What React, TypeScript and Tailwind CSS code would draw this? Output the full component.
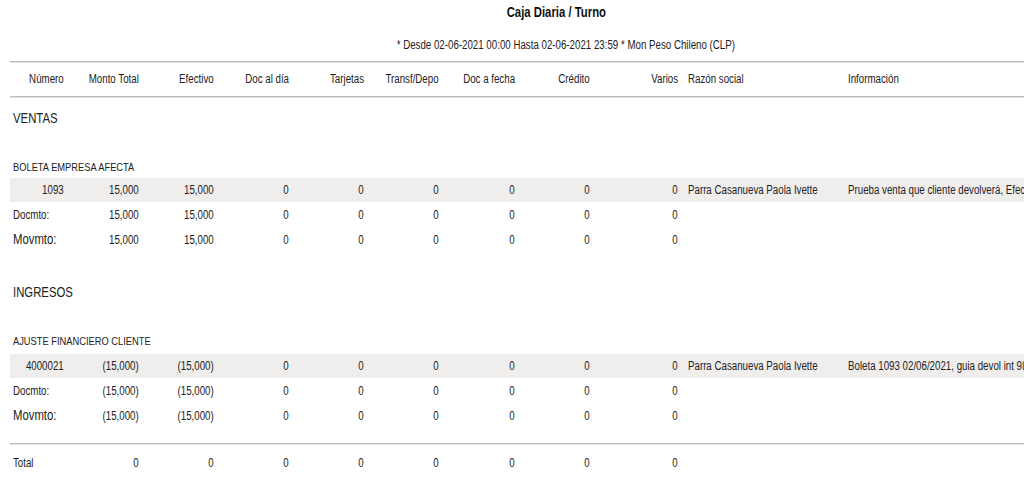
import React from "react";

const FONT = { fontFamily: "'Liberation Sans', Arial, sans-serif" };

const GRID = "grid grid-cols-[54px_75px_75px_75px_75px_75px_76px_75px_88px_170px_1fr] items-center";

type Align = "l" | "r" | "c";

function N({ children, a = "l" }: { children: React.ReactNode; a?: Align }) {
  const o = a === "l" ? "origin-left" : a === "r" ? "origin-right" : "origin-center";
  return <span className={`inline-block whitespace-nowrap scale-x-[0.81] ${o}`}>{children}</span>;
}

type RowProps = {
  first: string;
  firstLeft?: boolean;
  firstBig?: boolean;
  vals: string[];
  razon?: string;
  info?: string;
  band?: boolean;
  h: string;
};

function Row({ first, firstLeft, firstBig, vals, razon, info, band, h }: RowProps) {
  return (
    <div className={`${GRID} ${h} ${band ? "bg-[#f0eeed]" : ""} text-[12px] text-[#222] whitespace-nowrap`}>
      <div className={firstLeft ? `pl-[3px] text-left ${firstBig ? "text-[14px]" : ""}` : "text-right"}>
        <N a={firstLeft ? "l" : "r"}>{first}</N>
      </div>
      {vals.map((v, i) => (
        <div key={i} className="text-right">
          <N a="r">{v}</N>
        </div>
      ))}
      <div className="pl-[10px] overflow-hidden">{razon ? <N>{razon}</N> : null}</div>
      <div className="overflow-hidden">{info ? <N>{info}</N> : null}</div>
    </div>
  );
}

function Rule() {
  return <div className="h-[2px] bg-[#bdbdbd] border-b border-[#e2e2e2]" />;
}

const HEAD = [
  "Número",
  "Monto Total",
  "Efectivo",
  "Doc al día",
  "Tarjetas",
  "Transf/Depo",
  "Doc a fecha",
  "Crédito",
  "Varios",
];

export default function App() {
  const zeros = ["0", "0", "0", "0", "0", "0"];
  const pos = ["15,000", "15,000", ...zeros];
  const neg = ["(15,000)", "(15,000)", ...zeros];
  return (
    <div className="w-[1024px] h-[485px] overflow-hidden bg-white text-[#222]" style={FONT}>
      <div className="h-[24px] leading-[24px] pl-[88px] text-center text-[14px] font-bold text-[#111]">
        <N a="c">Caja Diaria / Turno</N>
      </div>
      <div className="mt-[11px] h-[20px] leading-[20px] pl-[108px] text-center text-[12px] text-[#222]">
        <N a="c">* Desde 02-06-2021 00:00 Hasta 02-06-2021 23:59 * Mon Peso Chileno (CLP)</N>
      </div>
      <div className="pl-[10px]">
        <div className="mt-[6px]">
          <Rule />
        </div>
        <div className={`${GRID} mt-[6px] h-[20px] text-[12px] text-[#222] whitespace-nowrap`}>
          {HEAD.map((h) => (
            <div key={h} className="text-right">
              <N a="r">{h}</N>
            </div>
          ))}
          <div className="pl-[10px]">
            <N>Razón social</N>
          </div>
          <div>
            <N>Información</N>
          </div>
        </div>
        <div className="mt-[7px]">
          <Rule />
        </div>

        <div className="mt-[10px] h-[20px] leading-[20px] pl-[3px] text-[14px]">
          <N>VENTAS</N>
        </div>
        <div className="mt-[31px] h-[16px] leading-[16px] pl-[3px] text-[11.5px]">
          <N>BOLETA EMPRESA AFECTA</N>
        </div>
        <div className="mt-[3px]">
          <Row
            band
            h="h-[24px]"
            first="1093"
            vals={pos}
            razon="Parra Casanueva Paola Ivette"
            info="Prueba venta que cliente devolverá, Efectivo"
          />
          <Row h="h-[25px]" first="Docmto:" firstLeft vals={pos} />
          <Row h="h-[25px]" first="Movmto:" firstLeft firstBig vals={pos} />
        </div>

        <div className="mt-[30px] h-[20px] leading-[20px] pl-[3px] text-[14px]">
          <N>INGRESOS</N>
        </div>
        <div className="mt-[31px] h-[16px] leading-[16px] pl-[3px] text-[11.5px]">
          <N>AJUSTE FINANCIERO CLIENTE</N>
        </div>
        <div className="mt-[5px]">
          <Row
            band
            h="h-[24px]"
            first="4000021"
            vals={neg}
            razon="Parra Casanueva Paola Ivette"
            info="Boleta 1093 02/06/2021, guia devol int 9876"
          />
          <Row h="h-[25px]" first="Docmto:" firstLeft vals={neg} />
          <Row h="h-[25px]" first="Movmto:" firstLeft firstBig vals={neg} />
        </div>

        <div className="mt-[15px]">
          <Rule />
        </div>
        <div className="mt-[8px]">
          <Row h="h-[20px]" first="Total" firstLeft vals={["0", "0", "0", "0", "0", "0", "0", "0"]} />
        </div>
      </div>
    </div>
  );
}
